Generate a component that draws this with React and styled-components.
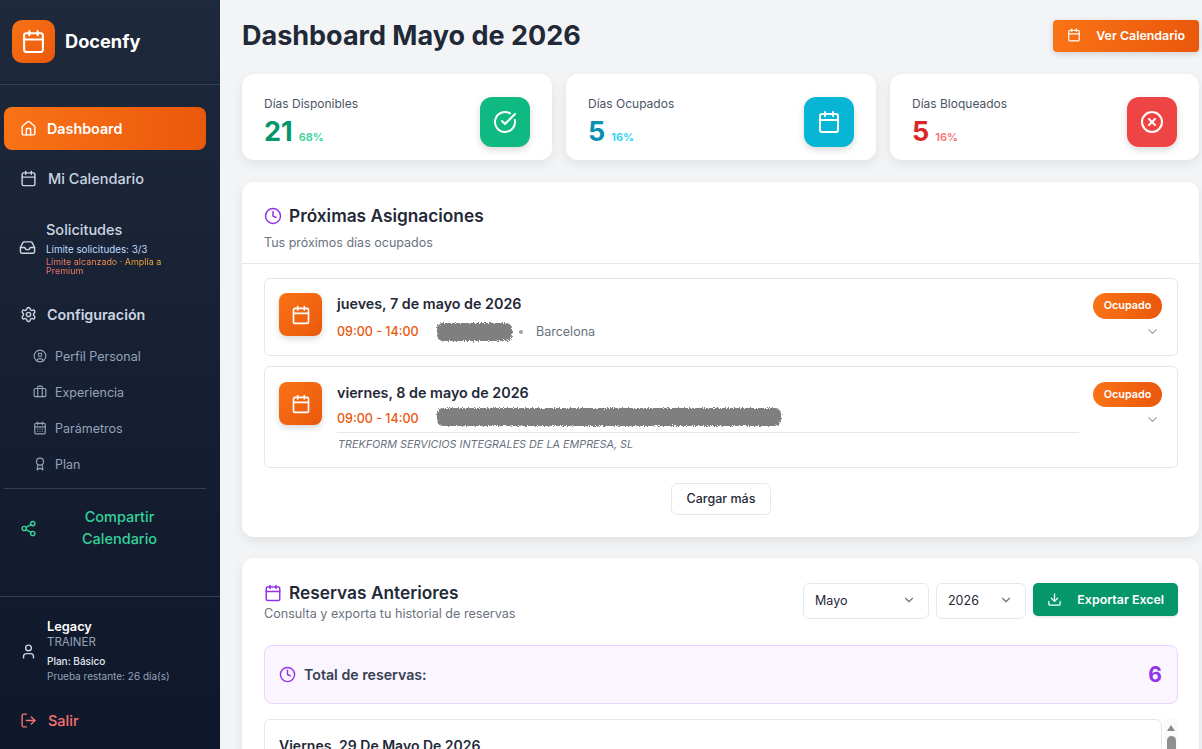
import React from "react";
import styled, { createGlobalStyle } from "styled-components";
import {
  Calendar,
  House,
  Inbox,
  Settings,
  CircleUser,
  Briefcase,
  CalendarDays,
  Award,
  Share2,
  User,
  LogOut,
  CircleCheckBig,
  CircleX,
  Clock,
  ChevronDown,
  Download,
} from "lucide-react";

const GlobalStyle = createGlobalStyle`
  html, body {
    margin: 0;
    height: 100%;
    overflow: hidden;
    background: #f3f4f6;
    font-family: Inter, "Liberation Sans", sans-serif;
  }
  * { box-sizing: border-box; }
`;

const Layout = styled.div`
  display: flex;
  width: 1202px;
  height: 749px;
  overflow: hidden;
`;

const Sidebar = styled.aside`
  width: 220px;
  flex-shrink: 0;
  height: 749px;
  display: flex;
  flex-direction: column;
  background: linear-gradient(180deg, #1e293b 0%, #0f172a 100%);
`;

const Brand = styled.div`
  height: 85px;
  padding: 20px 12px 0;
  display: flex;
  gap: 10px;
  border-bottom: 1px solid #334155;
`;

const BrandLogo = styled.div`
  width: 43px;
  height: 43px;
  border-radius: 10px;
  background: linear-gradient(135deg, #f97316, #ea580c);
  color: #fff;
  display: flex;
  align-items: center;
  justify-content: center;
`;

const BrandName = styled.div`
  color: #fff;
  font-size: 18.2px;
  font-weight: 700;
  line-height: 43px;
`;

const Nav = styled.nav`
  padding: 22px 14px 0 4px;
  flex: 1;
  display: flex;
  flex-direction: column;
`;

const NavItem = styled.div`
  height: 43px;
  padding-left: 16px;
  display: flex;
  align-items: center;
  gap: ${(p) => (p.$strong ? 10 : 11)}px;
  border-radius: 8px;
  font-size: ${(p) => (p.$strong ? 14.3 : 14.5)}px;
  font-weight: ${(p) => (p.$strong ? 600 : 500)};
  color: ${(p) => (p.$active ? "#fff" : "#cbd5e1")};
  background: ${(p) => (p.$active ? "linear-gradient(90deg, #f97316, #ea580c)" : "none")};
  margin-bottom: ${(p) => p.$mb || 0}px;
`;

const RequestItem = styled.div`
  display: flex;
  align-items: center;
  padding-left: 15px;
  gap: 10px;
  color: #cbd5e1;
  height: 70px;
  margin: 5px 0 11px;
`;

const RequestText = styled.div`
  display: flex;
  flex-direction: column;
  width: 128px;
`;

const RequestTitle = styled.div`
  font-size: 14.5px;
  font-weight: 500;
  line-height: 20px;
  margin-bottom: 3px;
`;

const RequestLimit = styled.div`
  font-size: 9.8px;
  line-height: 13px;
  color: #bfdbfe;
  margin-bottom: 1px;
`;

const RequestWarn = styled.div`
  font-size: 8.95px;
  line-height: 9px;
  background: linear-gradient(90deg, #f87171, #fbbf24);
  -webkit-background-clip: text;
  background-clip: text;
  color: transparent;
`;

const SubItem = styled.div`
  height: 36px;
  padding-left: 29px;
  display: flex;
  align-items: center;
  gap: 8px;
  font-size: 12.5px;
  color: #94a3b8;
`;

const NavDivider = styled.div`
  height: 1px;
  background: #334155;
  margin-top: 6px;
`;

const ShareItem = styled.div`
  display: flex;
  align-items: center;
  padding: 17px 0 0 16px;
  color: #34d399;
`;

const ShareText = styled.div`
  width: 165px;
  padding: 0 20px;
  text-align: center;
  font-size: 14.5px;
  font-weight: 500;
  line-height: 22px;
`;

const UserBlock = styled.div`
  border-top: 1px solid #334155;
  padding: 22px 0 0 20px;
  height: 153px;
  display: flex;
  flex-direction: column;
`;

const UserRow = styled.div`
  display: flex;
  align-items: center;
  gap: 10px;
  color: #cbd5e1;
`;

const UserInfo = styled.div`
  display: flex;
  flex-direction: column;
`;

const UserName = styled.div`
  color: #fff;
  font-size: 12.8px;
  font-weight: 600;
  line-height: 16px;
`;

const UserRole = styled.div`
  color: #94a3b8;
  font-size: 11.5px;
  line-height: 15px;
  margin-bottom: 4px;
`;

const UserPlan = styled.div`
  color: #e2e8f0;
  font-size: 10px;
  font-weight: 500;
  line-height: 15px;
`;

const UserTrial = styled.div`
  color: #94a3b8;
  font-size: 10px;
  line-height: 15px;
`;

const Logout = styled.div`
  display: flex;
  align-items: center;
  gap: 11px;
  color: #f87171;
  font-size: 14.5px;
  font-weight: 500;
  margin-top: 28px;
`;

const Main = styled.main`
  flex: 1;
  padding: 20px 3px 0 22px;
  min-width: 0;
`;

const TopBar = styled.div`
  display: flex;
  justify-content: space-between;
  align-items: flex-start;
  height: 54px;
`;

const Title = styled.h1`
  margin: 0;
  font-size: 27px;
  font-weight: 700;
  line-height: 31px;
  color: #1f2937;
`;

const PrimaryButton = styled.button`
  border: 0;
  height: 32px;
  width: 146px;
  border-radius: 4px;
  padding: 0 14px 2px;
  display: flex;
  align-items: center;
  justify-content: space-between;
  color: #fff;
  font: 600 12.4px Inter, sans-serif;
  background: linear-gradient(90deg, #f97316, #ea580c);
  box-shadow: 0 2px 6px rgba(0, 0, 0, 0.15);
`;

const Stats = styled.div`
  display: grid;
  grid-template-columns: 310px 310px 309px;
  gap: 14px;
  margin-bottom: 22px;
`;

const StatCard = styled.div`
  height: 86px;
  background: #fff;
  border-radius: 12px;
  padding: 22px 22px 0;
  display: flex;
  justify-content: space-between;
  box-shadow: 0 4px 12px rgba(0, 0, 0, 0.08);
`;

const StatBody = styled.div`
  display: flex;
  flex-direction: column;
`;

const StatLabel = styled.div`
  font-size: 12px;
  color: #4b5563;
  line-height: 16px;
  margin-bottom: 6px;
`;

const StatLine = styled.div`
  display: flex;
  align-items: baseline;
  gap: 6px;
`;

const StatValue = styled.div`
  font-size: 27px;
  font-weight: 700;
  line-height: 28px;
  color: ${(p) => p.$color};
`;

const StatPct = styled.div`
  font-size: 11px;
  font-weight: 600;
  color: ${(p) => p.$color};
`;

const StatIcon = styled.div`
  width: 50px;
  height: 50px;
  margin-top: 1px;
  border-radius: 12px;
  background: ${(p) => p.$bg};
  color: #fff;
  display: flex;
  align-items: center;
  justify-content: center;
  box-shadow: 0 3px 7px rgba(0, 0, 0, 0.15);
`;

const Panel = styled.section`
  background: #fff;
  border-radius: 12px;
  box-shadow: 0 4px 12px rgba(0, 0, 0, 0.08);
  margin-bottom: 21px;
`;

const PanelHead = styled.div`
  height: 82px;
  padding: 23px 22px 0;
  border-bottom: 1px solid #e5e7eb;
`;

const PanelTitle = styled.div`
  display: flex;
  align-items: center;
  gap: 7px;
  font-size: 17.3px;
  font-weight: 600;
  line-height: 22px;
  color: #1f2937;
  svg { color: #9333ea; }
`;

const PanelSub = styled.div`
  font-size: 12.5px;
  line-height: 16px;
  color: #6b7280;
  margin-top: 8px;
`;

const List = styled.div`
  padding: 14px 21px 22px 22px;
  display: flex;
  flex-direction: column;
`;

const Row = styled.div`
  height: ${(p) => p.$h}px;
  border: 1px solid #e5e7eb;
  border-radius: 6px;
  padding: ${(p) => p.$pt}px 15px 0 14px;
  margin-bottom: 10px;
  display: flex;
  gap: 15px;
`;

const RowIcon = styled.div`
  width: 43px;
  height: 43px;
  flex-shrink: 0;
  border-radius: 8px;
  background: linear-gradient(135deg, #f97316, #ea580c);
  color: #fff;
  display: flex;
  align-items: center;
  justify-content: center;
  box-shadow: 0 3px 6px rgba(0, 0, 0, 0.15);
`;

const RowBody = styled.div`
  flex: 1;
  min-width: 0;
  padding-top: 1px;
`;

const RowDate = styled.div`
  font-size: 14.3px;
  font-weight: 600;
  line-height: 20px;
  color: #1f2937;
  margin-bottom: ${(p) => p.$mb}px;
`;

const RowMeta = styled.div`
  display: flex;
  align-items: center;
  font-size: 12.5px;
  line-height: 20px;
  color: #6b7280;
`;

const RowTime = styled.span`
  color: #ea580c;
  font-weight: 500;
  width: 100px;
`;

const Dot = styled.span`
  width: 4px;
  height: 4px;
  border-radius: 50%;
  background: #9ca3af;
  margin: 0 13px 0 7px;
`;

const RowNote = styled.div`
  margin-top: 2px;
  padding: 4px 0 0 1px;
  width: 742px;
  border-top: 1px solid #e5e7eb;
  font-size: 10.8px;
  font-style: italic;
  line-height: 16px;
  color: #6b7280;
`;

const RowSide = styled.div`
  width: 70px;
  display: flex;
  flex-direction: column;
  align-items: flex-end;
`;

const Badge = styled.div`
  width: 69px;
  height: ${(p) => p.$h}px;
  padding-bottom: 1px;
  border-radius: 13px;
  background: linear-gradient(90deg, #f97316, #ea580c);
  color: #fff;
  font-size: 10.8px;
  font-weight: 600;
  display: flex;
  align-items: center;
  justify-content: center;
`;

const Toggle = styled.div`
  color: #9ca3af;
  display: flex;
  margin: 5px 2px 0 0;
`;

const LoadMore = styled.button`
  align-self: center;
  width: 100px;
  height: 32px;
  margin-top: 5px;
  padding: 0 0 2px;
  border: 1px solid #e5e7eb;
  border-radius: 6px;
  background: #fff;
  color: #1f2937;
  font: 500 12.5px Inter, sans-serif;
`;

const HistoryHead = styled.div`
  display: flex;
  justify-content: space-between;
  padding: 24px 21px 0 22px;
`;

const HistorySub = styled.div`
  font-size: 12.6px;
  line-height: 16px;
  color: #6b7280;
  margin-top: 2px;
`;

const Filters = styled.div`
  display: flex;
  gap: 7px;
  align-items: flex-start;
  margin-top: 1px;
`;

const Select = styled.div`
  width: ${(p) => p.$w}px;
  height: 36px;
  padding: 0 12px 2px 11px;
  border: 1px solid #e2e8f0;
  border-radius: 6px;
  display: flex;
  align-items: center;
  justify-content: space-between;
  font-size: 12.5px;
  color: #1f2937;
  svg { color: #6b7280; }
`;

const ExportButton = styled.button`
  width: 145px;
  height: 33px;
  border: 0;
  border-radius: 5px;
  padding: 0 14px;
  display: flex;
  align-items: center;
  justify-content: space-between;
  background: #059669;
  color: #fff;
  font: 600 12.4px Inter, sans-serif;
  box-shadow: 0 1px 3px rgba(0, 0, 0, 0.12);
`;

const Total = styled.div`
  margin: 23px 21px 0 22px;
  height: 59px;
  padding: 0 15px 0 14px;
  border: 1px solid #e9d5ff;
  border-radius: 8px;
  background: #faf5ff;
  display: flex;
  align-items: center;
  justify-content: space-between;
`;

const TotalLabel = styled.div`
  display: flex;
  align-items: center;
  gap: 8px;
  font-size: 14.2px;
  font-weight: 600;
  color: #374151;
  svg { color: #9333ea; }
`;

const TotalValue = styled.div`
  font-size: 21px;
  font-weight: 700;
  color: #9333ea;
`;

const HistoryScroll = styled.div`
  display: flex;
  gap: 2px;
  margin: 15px 21px 0 22px;
`;

const HistoryItem = styled.div`
  flex: 1;
  height: 60px;
  border: 1px solid #e5e7eb;
  border-radius: 6px;
  padding: 16px 14px;
  font-size: 14px;
  font-weight: 600;
  line-height: 20px;
  color: #1f2937;
`;

const Scrollbar = styled.div`
  width: 14px;
  background: #fafafa;
  display: flex;
  flex-direction: column;
  align-items: center;
  padding-top: 6px;
`;

const ScrollUp = styled.div`
  width: 0;
  height: 0;
  border-left: 4px solid transparent;
  border-right: 4px solid transparent;
  border-bottom: 6px solid #8a8a8a;
  margin-bottom: 5px;
`;

const ScrollThumb = styled.div`
  width: 9px;
  height: 40px;
  border-radius: 5px;
  background: #8f8f8f;
`;

const ScribbleSvg = styled.svg`
  display: block;
  overflow: visible;
`;

// the scribbled-out client names
function Redacted({ width, top = 2 }) {
  return (
    <ScribbleSvg width={width} height={22} viewBox={`0 0 ${width} 22`}>
      <filter id="scribble" x="-5%" y="-20%" width="110%" height="140%">
        <feTurbulence type="fractalNoise" baseFrequency="0.8" numOctaves="2" seed="4" />
        <feDisplacementMap in="SourceGraphic" scale="5" />
      </filter>
      <rect x="0" y={top} width={width} height="18" rx="6" fill="#7f7f7f" filter="url(#scribble)" />
    </ScribbleSvg>
  );
}

const stats = [
  { label: "Días Disponibles", value: "21", pct: "68%", dark: "#059669", light: "#34d399", bg: "#10b981", Icon: CircleCheckBig },
  { label: "Días Ocupados", value: "5", pct: "16%", dark: "#0891b2", light: "#22d3ee", bg: "#06b6d4", Icon: Calendar },
  { label: "Días Bloqueados", value: "5", pct: "16%", dark: "#dc2626", light: "#f87171", bg: "#ef4444", Icon: CircleX },
];

const configLinks = [
  { label: "Perfil Personal", Icon: CircleUser },
  { label: "Experiencia", Icon: Briefcase },
  { label: "Parámetros", Icon: CalendarDays },
  { label: "Plan", Icon: Award },
];

export default function App() {
  return (
    <Layout>
      <GlobalStyle />
      <Sidebar>
        <Brand>
          <BrandLogo>
            <Calendar size={25} />
          </BrandLogo>
          <BrandName>Docenfy</BrandName>
        </Brand>
        <Nav>
          <NavItem $active $strong $mb={7}>
            <House size={17} />
            Dashboard
          </NavItem>
          <NavItem $mb={7}>
            <Calendar size={17} />
            Mi Calendario
          </NavItem>
          <RequestItem>
            <Inbox size={17} />
            <RequestText>
              <RequestTitle>Solicitudes</RequestTitle>
              <RequestLimit>Límite solicitudes: 3/3</RequestLimit>
              <RequestWarn>Límite alcanzado · Amplía a Premium</RequestWarn>
            </RequestText>
          </RequestItem>
          <NavItem $strong $mb={2}>
            <Settings size={17} />
            Configuración
          </NavItem>
          {configLinks.map(({ label, Icon }) => (
            <SubItem key={label}>
              <Icon size={14} />
              {label}
            </SubItem>
          ))}
          <NavDivider />
          <ShareItem>
            <Share2 size={17} />
            <ShareText>Compartir Calendario</ShareText>
          </ShareItem>
        </Nav>
        <UserBlock>
          <UserRow>
            <User size={17} />
            <UserInfo>
              <UserName>Legacy</UserName>
              <UserRole>TRAINER</UserRole>
              <UserPlan>Plan: Básico</UserPlan>
              <UserTrial>Prueba restante: 26 día(s)</UserTrial>
            </UserInfo>
          </UserRow>
          <Logout>
            <LogOut size={17} />
            Salir
          </Logout>
        </UserBlock>
      </Sidebar>
      <Main>
        <TopBar>
          <Title>Dashboard Mayo de 2026</Title>
          <PrimaryButton>
            <Calendar size={14} />
            Ver Calendario
          </PrimaryButton>
        </TopBar>
        <Stats>
          {stats.map(({ label, value, pct, dark, light, bg, Icon }) => (
            <StatCard key={label}>
              <StatBody>
                <StatLabel>{label}</StatLabel>
                <StatLine>
                  <StatValue $color={dark}>{value}</StatValue>
                  <StatPct $color={light}>{pct}</StatPct>
                </StatLine>
              </StatBody>
              <StatIcon $bg={bg}>
                <Icon size={24} />
              </StatIcon>
            </StatCard>
          ))}
        </Stats>
        <Panel>
          <PanelHead>
            <PanelTitle>
              <Clock size={18} />
              Próximas Asignaciones
            </PanelTitle>
            <PanelSub>Tus próximos días ocupados</PanelSub>
          </PanelHead>
          <List>
            <Row $h={78} $pt={14}>
              <RowIcon>
                <Calendar size={20} />
              </RowIcon>
              <RowBody>
                <RowDate $mb={7}>jueves, 7 de mayo de 2026</RowDate>
                <RowMeta>
                  <RowTime>09:00 - 14:00</RowTime>
                  <Redacted width={75} />
                  <Dot />
                  Barcelona
                </RowMeta>
              </RowBody>
              <RowSide>
                <Badge $h={26}>Ocupado</Badge>
                <Toggle>
                  <ChevronDown size={15} />
                </Toggle>
              </RowSide>
            </Row>
            <Row $h={102} $pt={15}>
              <RowIcon>
                <Calendar size={20} />
              </RowIcon>
              <RowBody>
                <RowDate $mb={5}>viernes, 8 de mayo de 2026</RowDate>
                <RowMeta>
                  <RowTime>09:00 - 14:00</RowTime>
                  <Redacted width={344} top={0} />
                </RowMeta>
                <RowNote>TREKFORM SERVICIOS INTEGRALES DE LA EMPRESA, SL</RowNote>
              </RowBody>
              <RowSide>
                <Badge $h={25}>Ocupado</Badge>
                <Toggle>
                  <ChevronDown size={15} />
                </Toggle>
              </RowSide>
            </Row>
            <LoadMore>Cargar más</LoadMore>
          </List>
        </Panel>
        <Panel>
          <HistoryHead>
            <div>
              <PanelTitle>
                <Calendar size={18} />
                Reservas Anteriores
              </PanelTitle>
              <HistorySub>Consulta y exporta tu historial de reservas</HistorySub>
            </div>
            <Filters>
              <Select $w={126}>
                Mayo
                <ChevronDown size={14} />
              </Select>
              <Select $w={90}>
                2026
                <ChevronDown size={14} />
              </Select>
              <ExportButton>
                <Download size={15} />
                Exportar Excel
              </ExportButton>
            </Filters>
          </HistoryHead>
          <Total>
            <TotalLabel>
              <Clock size={17} />
              Total de reservas:
            </TotalLabel>
            <TotalValue>6</TotalValue>
          </Total>
          <HistoryScroll>
            <HistoryItem>Viernes, 29 De Mayo De 2026</HistoryItem>
            <Scrollbar>
              <ScrollUp />
              <ScrollThumb />
            </Scrollbar>
          </HistoryScroll>
        </Panel>
      </Main>
    </Layout>
  );
}
